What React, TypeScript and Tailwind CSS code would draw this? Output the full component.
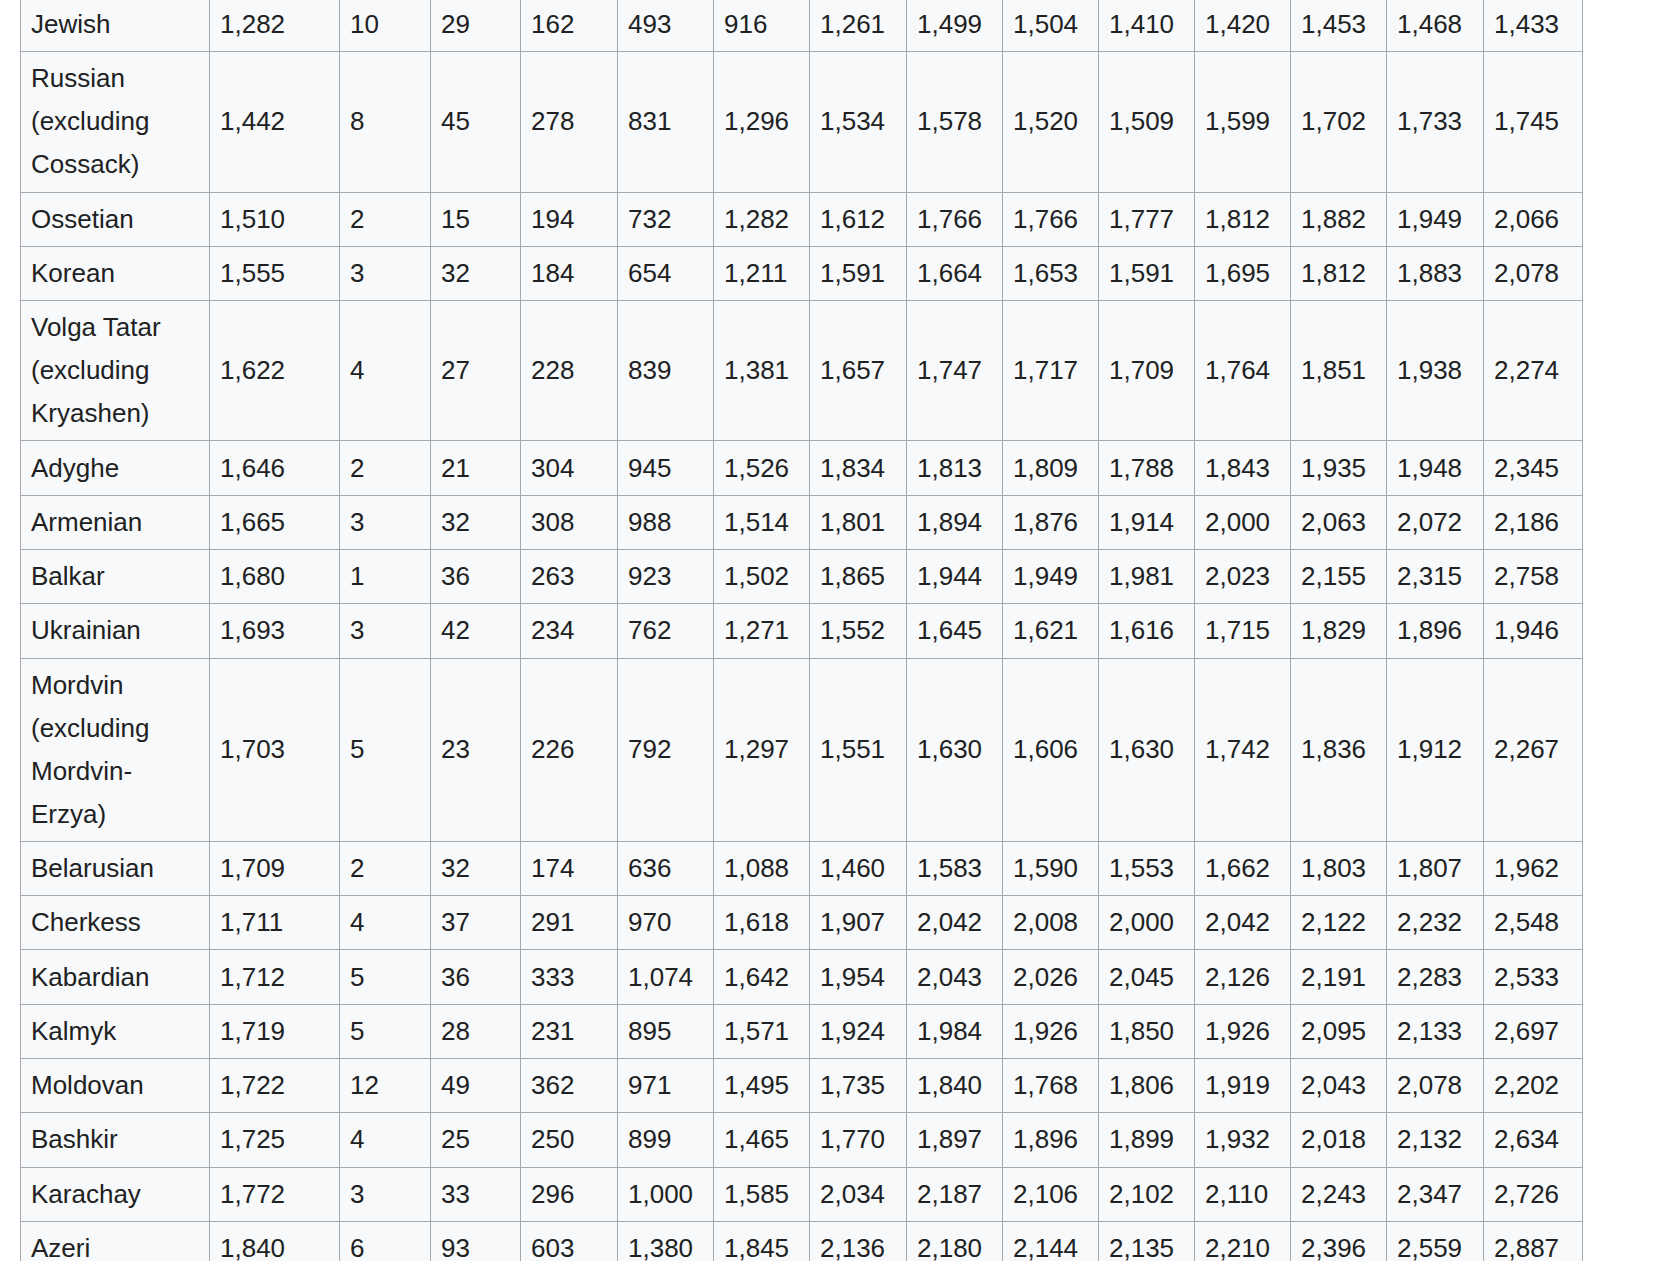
const COL_WIDTHS = [189, 130, 91, 90, 97, 96, 96, 97, 96, 96, 96, 96, 96, 97, 99];

// name, then 14 yearly values
const ROWS: [string, ...string[]][] = [
  ["Jewish", "1,282", "10", "29", "162", "493", "916", "1,261", "1,499", "1,504", "1,410", "1,420", "1,453", "1,468", "1,433"],
  ["Russian (excluding Cossack)", "1,442", "8", "45", "278", "831", "1,296", "1,534", "1,578", "1,520", "1,509", "1,599", "1,702", "1,733", "1,745"],
  ["Ossetian", "1,510", "2", "15", "194", "732", "1,282", "1,612", "1,766", "1,766", "1,777", "1,812", "1,882", "1,949", "2,066"],
  ["Korean", "1,555", "3", "32", "184", "654", "1,211", "1,591", "1,664", "1,653", "1,591", "1,695", "1,812", "1,883", "2,078"],
  ["Volga Tatar (excluding Kryashen)", "1,622", "4", "27", "228", "839", "1,381", "1,657", "1,747", "1,717", "1,709", "1,764", "1,851", "1,938", "2,274"],
  ["Adyghe", "1,646", "2", "21", "304", "945", "1,526", "1,834", "1,813", "1,809", "1,788", "1,843", "1,935", "1,948", "2,345"],
  ["Armenian", "1,665", "3", "32", "308", "988", "1,514", "1,801", "1,894", "1,876", "1,914", "2,000", "2,063", "2,072", "2,186"],
  ["Balkar", "1,680", "1", "36", "263", "923", "1,502", "1,865", "1,944", "1,949", "1,981", "2,023", "2,155", "2,315", "2,758"],
  ["Ukrainian", "1,693", "3", "42", "234", "762", "1,271", "1,552", "1,645", "1,621", "1,616", "1,715", "1,829", "1,896", "1,946"],
  ["Mordvin (excluding Mordvin-Erzya)", "1,703", "5", "23", "226", "792", "1,297", "1,551", "1,630", "1,606", "1,630", "1,742", "1,836", "1,912", "2,267"],
  ["Belarusian", "1,709", "2", "32", "174", "636", "1,088", "1,460", "1,583", "1,590", "1,553", "1,662", "1,803", "1,807", "1,962"],
  ["Cherkess", "1,711", "4", "37", "291", "970", "1,618", "1,907", "2,042", "2,008", "2,000", "2,042", "2,122", "2,232", "2,548"],
  ["Kabardian", "1,712", "5", "36", "333", "1,074", "1,642", "1,954", "2,043", "2,026", "2,045", "2,126", "2,191", "2,283", "2,533"],
  ["Kalmyk", "1,719", "5", "28", "231", "895", "1,571", "1,924", "1,984", "1,926", "1,850", "1,926", "2,095", "2,133", "2,697"],
  ["Moldovan", "1,722", "12", "49", "362", "971", "1,495", "1,735", "1,840", "1,768", "1,806", "1,919", "2,043", "2,078", "2,202"],
  ["Bashkir", "1,725", "4", "25", "250", "899", "1,465", "1,770", "1,897", "1,896", "1,899", "1,932", "2,018", "2,132", "2,634"],
  ["Karachay", "1,772", "3", "33", "296", "1,000", "1,585", "2,034", "2,187", "2,106", "2,102", "2,110", "2,243", "2,347", "2,726"],
  ["Azeri", "1,840", "6", "93", "603", "1,380", "1,845", "2,136", "2,180", "2,144", "2,135", "2,210", "2,396", "2,559", "2,887"],
];

export default function App() {
  return (
    <div className="h-[1261px] overflow-hidden bg-white pl-[20px] font-['Liberation_Sans',Arial,sans-serif]">
      <table className="-mt-[3px] w-[1562px] table-fixed border-collapse bg-[#f8f9fa] text-[26px] leading-[43px] text-[#202122]">
        <colgroup>
          {COL_WIDTHS.map((w, i) => (
            <col key={i} style={{ width: w }} />
          ))}
        </colgroup>
        <tbody>
          {ROWS.map((row) => (
            <tr key={row[0]}>
              {row.map((cell, i) => (
                <td
                  key={i}
                  className="border border-[#a2a9b1] px-[10px] py-[5.15px] text-left align-middle"
                >
                  {cell}
                </td>
              ))}
            </tr>
          ))}
        </tbody>
      </table>
    </div>
  );
}
